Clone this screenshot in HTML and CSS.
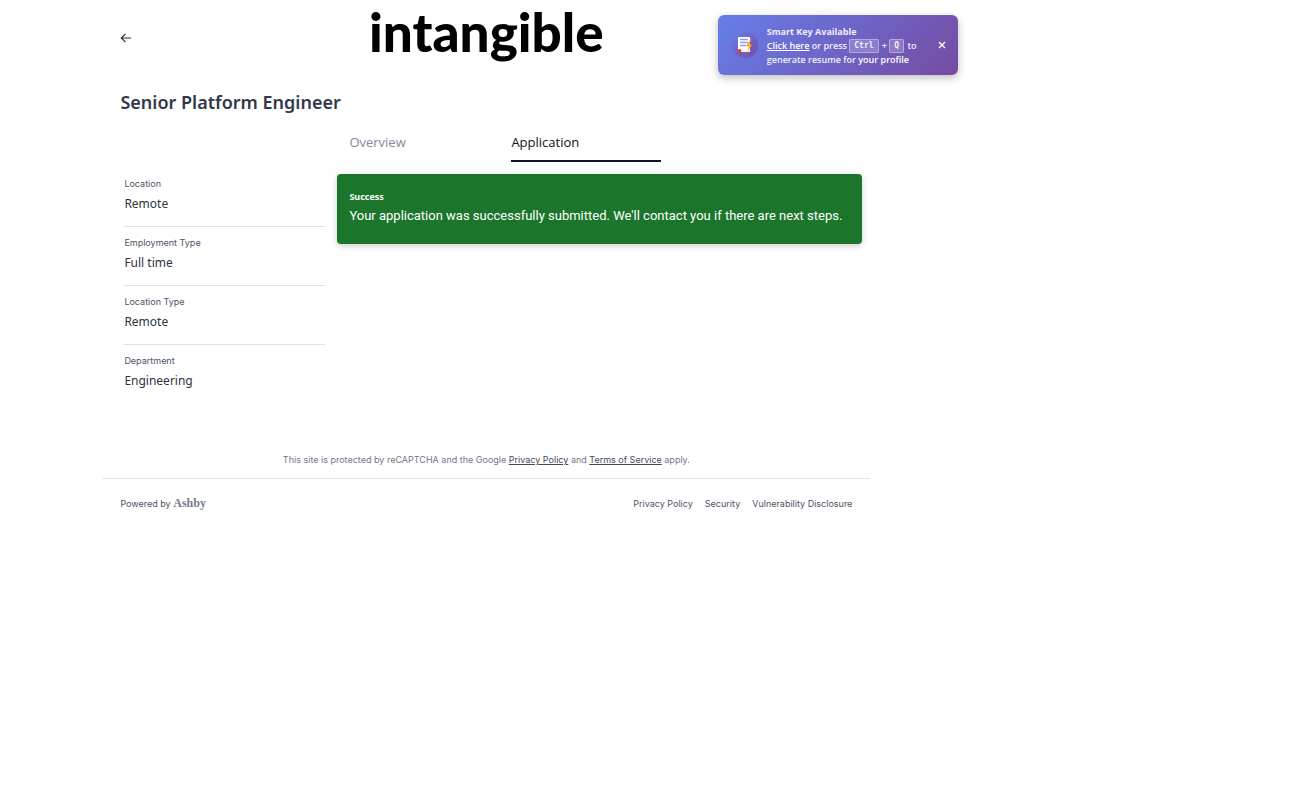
FILE: index.html
```html
<!DOCTYPE html>
<html lang="en">
<head>
  <meta charset="utf-8">
  <title>Senior Platform Engineer</title>
  <link rel="stylesheet" href="styles.css">
</head>
<body>
<div class="page">

  <div class="container">
    <header class="header">
      <a href="#" class="back" aria-label="Back">
        <svg width="12" height="12" viewBox="0 0 12 12" fill="none" stroke="#2d3142" stroke-width="1.2">
          <path d="M11 6H1.5M5.5 1.8L1.3 6l4.2 4.2"/>
        </svg>
      </a>
      <a href="#" class="logo">intangible</a>
    </header>

    <h1 class="title">Senior Platform Engineer</h1>

    <div class="content">
      <aside class="details">
        <div class="detail">
          <h2>Location</h2>
          <p>Remote</p>
        </div>
        <div class="detail">
          <h2>Employment Type</h2>
          <p>Full time</p>
        </div>
        <div class="detail">
          <h2>Location Type</h2>
          <p>Remote</p>
        </div>
        <div class="detail">
          <h2>Department</h2>
          <p>Engineering</p>
        </div>
      </aside>

      <main class="main">
        <nav class="tabs">
          <a href="#" class="tab">Overview</a>
          <a href="#" class="tab active">Application</a>
        </nav>
        <div class="success">
          <h2>Success</h2>
          <p>Your application was successfully submitted. We'll contact you if there are next steps.</p>
        </div>
      </main>
    </div>

    <p class="recaptcha">This site is protected by reCAPTCHA and the Google <a href="#">Privacy Policy</a> and <a href="#">Terms of Service</a> apply.</p>

    <footer class="footer">
      <a href="#" class="powered">Powered by <span class="ashby">Ashby</span></a>
      <div class="footer-links">
        <a href="#">Privacy Policy</a>
        <a href="#">Security</a>
        <a href="#">Vulnerability Disclosure</a>
      </div>
    </footer>
  </div>

  <!-- Smart key notification -->
  <div class="toast">
    <svg class="toast-icon" width="28" height="28" viewBox="0 0 28 28">
      <defs>
        <linearGradient id="badge" x1="0" y1="0" x2="1" y2="1">
          <stop offset="0" stop-color="#667eea"/>
          <stop offset="1" stop-color="#764ba2"/>
        </linearGradient>
      </defs>
      <circle cx="15" cy="14" r="13" fill="url(#badge)"/>
      <rect x="8" y="6" width="12" height="15" rx="1" fill="#fff"/>
      <path d="M10 8.500h8M10 11.500h8M10 14.500h6" stroke="#8fa0ee" stroke-width="1.3"/>
      <path d="M21.500 6.500l-5.500 9h3l-2.500 7.500 5.500-9.500h-2.500z" fill="#f9a61a"/>
      <circle cx="9.500" cy="20" r="2" fill="#e63946"/>
    </svg>
    <div class="toast-text">
      <strong>Smart Key Available</strong>
      <div><a href="#">Click here</a> or press <kbd>Ctrl</kbd> + <kbd>Q</kbd> to</div>
      <div>generate resume for <b>your profile</b></div>
    </div>
    <button type="button" class="toast-close" aria-label="Close">
      <svg width="8" height="8" viewBox="0 0 8 8" stroke="#fff" stroke-width="1.3"><path d="M1 1l6 6M7 1L1 7"/></svg>
    </button>
  </div>

</div>
</body>
</html>
```
FILE: styles.css
```css
* {
  box-sizing: border-box;
}
body {
  margin: 0;
  background: #fff;
  color: #2f3340;
  font-family: "Open Sans", "Noto Sans", sans-serif;
  font-size: 13px;
}
h1, h2, p {
  margin: 0;
}
a {
  color: inherit;
  text-decoration: none;
}

.page {
  position: relative;
  width: 75%;
}
.container {
  max-width: 768px;
  margin: 0 auto;
}

/* Header */
.header {
  display: grid;
  grid-template-columns: 1fr auto 1fr;
  align-items: center;
  height: 76px;
  padding: 0 18px;
}
.back {
  display: flex;
}
.logo {
  align-self: start;
  color: #000;
  font-family: Lato, sans-serif;
  font-size: 53px;
  font-weight: 900;
  line-height: 64px;
}
.title {
  padding: 0 18px;
  color: #32384a;
  font-family: "Noto Sans", sans-serif;
  font-size: 18px;
  font-weight: 600;
  line-height: 52px;
}

/* Two columns */
.content {
  display: flex;
  gap: 12px;
  padding: 0 8px 0 22px;
}
.details {
  flex: 0 0 201px;
  padding-top: 48px;
}
.detail {
  padding-bottom: 10px;
  margin-bottom: 8px;
  border-bottom: 1px solid #e3e3e6;
}
.detail:last-child {
  border-bottom: 0;
}
.detail h2 {
  color: #4d5264;
  font-family: Inter, sans-serif;
  font-size: 9px;
  font-weight: 400;
  line-height: 16px;
}
.detail p {
  font-family: "Noto Sans", sans-serif;
  font-size: 12px;
  line-height: 24px;
}
.main {
  flex: 1;
}

.tabs {
  display: flex;
  gap: 12px;
  padding: 0 12px;
  margin-bottom: 12px;
}
.tab {
  width: 150px;
  height: 34px;
  color: #84889c;
  line-height: 28px;
  border-bottom: 2px solid transparent;
}
.tab.active {
  color: #0f1222;
  border-color: #0f1222;
}

.success {
  padding: 14px 8px 18px 12px;
  border-radius: 4px;
  background: #1b762b;
  box-shadow: 0 2px 6px rgba(0, 0, 0, .2);
  color: #fff;
}
.success h2 {
  font-family: "Noto Sans", sans-serif;
  font-size: 9px;
  font-weight: 700;
  line-height: 18px;
}
.success p {
  font-family: Roboto, sans-serif;
  line-height: 20px;
}

/* Footer */
.recaptcha {
  margin-top: 31px;
  color: #73778b;
  font-family: Inter, sans-serif;
  font-size: 9px;
  line-height: 36px;
  text-align: center;
}
.recaptcha a {
  color: #45495c;
  text-decoration: underline;
}
.footer {
  display: flex;
  align-items: center;
  justify-content: space-between;
  padding: 12px 18px;
  border-top: 1px solid #e3e3e6;
  color: #4d5264;
  font-family: Inter, sans-serif;
  font-size: 9px;
  line-height: 24px;
}
.ashby {
  color: #747a8d;
  font-family: "Liberation Serif", serif;
  font-size: 12px;
  font-weight: 700;
}
.footer-links {
  display: flex;
  gap: 12px;
}

/* Notification */
.toast {
  position: absolute;
  top: 15px;
  right: 15px;
  display: flex;
  align-items: center;
  width: 240px;
  height: 60px;
  padding: 0 12px;
  border-radius: 6px;
  background: linear-gradient(135deg, #667eea, #764ba2);
  box-shadow: 0 3px 9px rgba(0, 0, 0, .25);
  color: #f0effc;
}
.toast-icon {
  flex: none;
}
.toast-text {
  flex: 1;
  margin-left: 9px;
  padding-top: 2px;
  font-size: 9px;
  font-weight: 600;
  line-height: 14px;
}
.toast-text strong {
  display: block;
  font-weight: 700;
}
.toast-text b {
  color: #fff;
  font-weight: 600;
}
.toast-text a {
  color: #fff;
  text-decoration: underline;
}
.toast-text kbd {
  display: inline-block;
  padding: 0 4px;
  margin-right: 1px;
  border: 1px solid rgba(255, 255, 255, .35);
  border-radius: 2px;
  background: rgba(255, 255, 255, .2);
  font-family: "DejaVu Sans Mono", monospace;
  font-size: 8px;
  font-weight: 700;
  line-height: 12px;
  vertical-align: middle;
}
.toast-close {
  display: flex;
  padding: 0;
  border: 0;
  background: none;
  cursor: pointer;
}
```
